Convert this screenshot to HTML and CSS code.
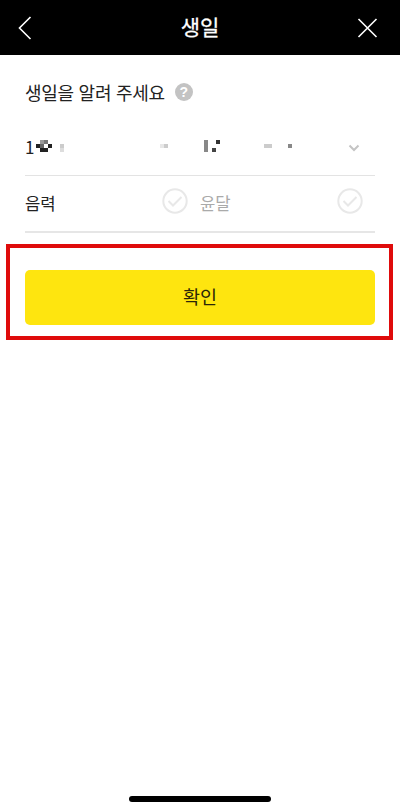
FILE: index.html
```
<!DOCTYPE html>
<html lang="ko">
<head>
  <meta charset="UTF-8" />
  <meta name="viewport" content="width=device-width, initial-scale=1.0"/>
  <title>생일</title>
  <link rel="stylesheet" href="styles.css">
</head>
<body>

  <header class="top-bar">
    <button class="icon-btn" aria-label="뒤로">
      <svg width="14" height="24" viewBox="0 0 14 24"><path d="M12.5 1 L1.5 12 L12.5 23"/></svg>
    </button>
    <h1 class="title">생일</h1>
    <button class="icon-btn" aria-label="닫기">
      <svg width="20" height="20" viewBox="0 0 20 20"><path d="M1.5 1 L19.5 19 M19.5 1 L1.5 19"/></svg>
    </button>
  </header>

  <main class="form">
    <div class="question">
      <span>생일을 알려 주세요</span>
      <span class="help">?</span>
    </div>

    <div class="row date-row">
      <span class="date">1</span>
      <!-- masked date -->
      <svg class="mask" width="260" height="12" viewBox="0 0 260 12" shape-rendering="crispEdges">
        <rect x="4" y="0" width="4" height="4" fill="#999"/>
        <rect x="8" y="0" width="4" height="4" fill="#777"/>
        <rect x="0" y="4" width="4" height="4" fill="#222"/>
        <rect x="4" y="4" width="4" height="4" fill="#666"/>
        <rect x="12" y="4" width="4" height="4" fill="#222"/>
        <rect x="4" y="8" width="8" height="4" fill="#222"/>
        <rect x="24" y="4" width="4" height="4" fill="#ccc"/>
        <rect x="24" y="8" width="4" height="4" fill="#ddd"/>
        <rect x="124" y="4" width="4" height="4" fill="#e8e8e8"/>
        <rect x="128" y="4" width="4" height="4" fill="#ccc"/>
        <rect x="168" y="0" width="4" height="12" fill="#888"/>
        <rect x="180" y="0" width="4" height="4" fill="#333"/>
        <rect x="176" y="8" width="4" height="4" fill="#444"/>
        <rect x="228" y="4" width="8" height="4" fill="#ccc"/>
        <rect x="252" y="4" width="4" height="4" fill="#888"/>
      </svg>
      <svg class="arrow" width="12" height="8" viewBox="0 0 12 8"><path d="M1.5 1.5 L6 6 L10.5 1.5"/></svg>
    </div>

    <div class="row calendar-row">
      <div class="option">
        <span>음력</span>
        <svg class="check" width="26" height="26" viewBox="0 0 26 26"><circle cx="13" cy="13" r="11.7"/><path d="M6.5 13 L11 17.5 L19.5 9"/></svg>
      </div>
      <div class="option disabled">
        <span>윤달</span>
        <svg class="check" width="26" height="26" viewBox="0 0 26 26"><circle cx="13" cy="13" r="11.7"/><path d="M6.5 13 L11 17.5 L19.5 9"/></svg>
      </div>
    </div>

    <div class="highlight">
      <button class="confirm">확인</button>
    </div>
  </main>

  <div class="home-bar"></div>

</body>
</html>
```
FILE: styles.css
```
* {
  box-sizing: border-box;
}

body {
  margin: 0;
  height: 812px;
  display: flex;
  flex-direction: column;
  align-items: center;
  background-color: #fff;
  color: #222;
  font-family: "Noto Sans CJK KR", sans-serif;
  overflow: hidden;
}

button {
  border: 0;
  padding: 0;
  font-family: inherit;
}

svg {
  display: block;
  flex-shrink: 0;
}

.top-bar {
  width: 100%;
  height: 55px;
  padding: 0 23px 0 18px;
  display: grid;
  grid-template-columns: 1fr auto 1fr;
  align-items: center;
  background-color: #000;
}

.icon-btn {
  display: flex;
  background: none;
}

.icon-btn:last-child {
  justify-self: end;
}

.icon-btn svg {
  overflow: visible;
}

.icon-btn path {
  fill: none;
  stroke: #fff;
  stroke-width: 1.6;
}

.title {
  margin: 0 0 4px 5px;
  color: #fff;
  font-size: 21px;
  line-height: 30px;
  font-weight: 400;
  -webkit-text-stroke: 0.3px #fff;
}

.form {
  width: 100%;
  padding: 0 25px;
}

.question {
  height: 65px;
  padding-top: 9px;
  display: flex;
  align-items: center;
  gap: 10px;
  font-size: 18px;
  letter-spacing: -0.28px;
}

.help {
  width: 18px;
  height: 18px;
  border-radius: 50%;
  background-color: #c3c3c3;
  color: #fff;
  font-family: "Liberation Sans", sans-serif;
  font-size: 14px;
  font-weight: bold;
  line-height: 18px;
  letter-spacing: 0;
  text-align: center;
}

.row {
  height: 56px;
  display: flex;
  align-items: center;
  border-bottom: 1px solid #e3e3e3;
}

.date-row {
  padding-right: 15px;
}

.date {
  width: 11px;
  margin-bottom: 2px;
  font-size: 17px;
}

.mask {
  margin-bottom: 3px;
}

.arrow {
  margin-left: auto;
}

.arrow path {
  fill: none;
  stroke: #c4c4c4;
  stroke-width: 2;
}

.calendar-row {
  height: 57px;
  border-bottom: 2px solid #e6e6e6;
}

.option {
  flex: 1;
  padding: 0 12px 2px 0;
  display: flex;
  align-items: center;
  justify-content: space-between;
  font-size: 16.7px;
}

.disabled {
  color: #aaa;
}

.check {
  margin-bottom: 4px;
  fill: none;
  stroke: #e8e8e8;
  stroke-width: 2;
}

.highlight {
  height: 96px;
  margin: 11px -18px 0 -19px;
  padding: 22px 14px 0 15px;
  border: 4px solid #df0b0b;
}

.confirm {
  display: block;
  width: 100%;
  height: 55px;
  padding-bottom: 4px;
  border-radius: 5px;
  background-color: #fee50f;
  color: #2b2608;
  font-size: 18.5px;
}

.home-bar {
  width: 142px;
  height: 6px;
  margin: auto 0 10px;
  border-radius: 3px;
  background-color: #000;
}
```
